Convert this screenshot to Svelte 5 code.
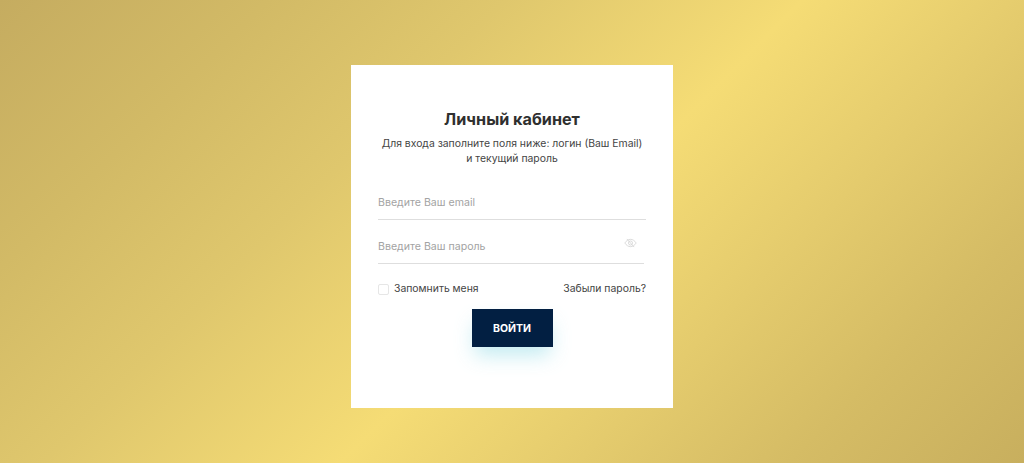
<script>
    let email = '';
    let password = '';
    let remember = false;
</script>

<main class="page">
    <form class="card" on:submit|preventDefault>
        <h1>Личный кабинет</h1>
        <p class="lead">Для входа заполните поля ниже: логин (Ваш Email)<br />и текущий пароль</p>

        <div class="field">
            <input type="email" placeholder="Введите Ваш email" bind:value={email} />
        </div>

        <div class="field field-pass">
            <input type="password" placeholder="Введите Ваш пароль" bind:value={password} />
            <svg class="eye" viewBox="0 0 16 12" width="13" height="10" aria-hidden="true">
                <path d="M1 6c2-3 4.300-4.500 7-4.500S13 3 15 6c-2 3-4.300 4.500-7 4.500S3 9 1 6z" />
                <circle cx="8" cy="6" r="2.500" />
                <path d="M12.500 11 3.500 1" />
            </svg>
        </div>

        <div class="row">
            <label class="remember">
                <input type="checkbox" bind:checked={remember} />
                <span>Запомнить меня</span>
            </label>
            <a href="#forgot">Забыли пароль?</a>
        </div>

        <button type="submit">ВОЙТИ</button>
    </form>
</main>

<style>
    :global(body) {
        margin: 0;
    }
    .page {
        height: 463px;
        overflow: hidden;
        display: flex;
        justify-content: center;
        padding-top: 65px;
        box-sizing: border-box;
        background: linear-gradient(135deg, #c5ac60 0%, #d2ba66 18%, #dfc76d 34%, #f5dc75 54%, #e6cd6e 68%, #d5bc65 84%, #c8af5e 100%);
        font-family: Inter, "Noto Sans", sans-serif;
    }
    .card {
        width: 322px;
        height: 343px;
        box-sizing: border-box;
        padding: 44px 27px 0;
        background: #fff;
        display: flex;
        flex-direction: column;
    }
    h1 {
        margin: 0;
        font-size: 16.2px;
        line-height: 20px;
        font-weight: 700;
        color: #2f2f2f;
        text-align: center;
    }
    .lead {
        margin: 7px -4px 0;
        font-size: 10.4px;
        line-height: 15px;
        color: #444;
        text-align: center;
        white-space: nowrap;
    }
    .field {
        position: relative;
        margin-top: 19px;
        border-bottom: 1px solid #dedede;
    }
    .field-pass {
        margin-top: 9px;
        margin-right: 2px;
    }
    input[type='email'],
    input[type='password'] {
        display: block;
        width: 100%;
        height: 34px;
        box-sizing: border-box;
        padding: 0;
        border: 0;
        outline: 0;
        background: transparent;
        font: inherit;
        font-size: 10.6px;
        color: #333;
    }
    input::placeholder {
        color: #a3a3a3;
        opacity: 1;
    }
    .eye {
        position: absolute;
        right: 7px;
        top: 9px;
        fill: none;
        stroke: #d4d4d4;
        stroke-width: 1;
    }
    .row {
        display: flex;
        justify-content: space-between;
        align-items: center;
        margin-top: 17px;
        font-size: 10.4px;
        line-height: 16px;
        color: #444;
    }
    .remember {
        display: flex;
        align-items: center;
        gap: 5px;
    }
    .remember input {
        appearance: none;
        width: 11px;
        height: 11px;
        margin: 0;
        border: 1px solid #e6e6e6;
        border-radius: 2px;
        background: #fff;
    }
    a {
        color: #444;
        text-decoration: none;
    }
    button {
        align-self: center;
        width: 81px;
        height: 38px;
        margin-top: 12px;
        border: 0;
        background: #021f42;
        color: #fff;
        font: inherit;
        font-size: 10.5px;
        font-weight: 700;
        box-shadow: 0 11px 20px -3px rgba(120, 210, 225, 0.45);
    }
</style>
